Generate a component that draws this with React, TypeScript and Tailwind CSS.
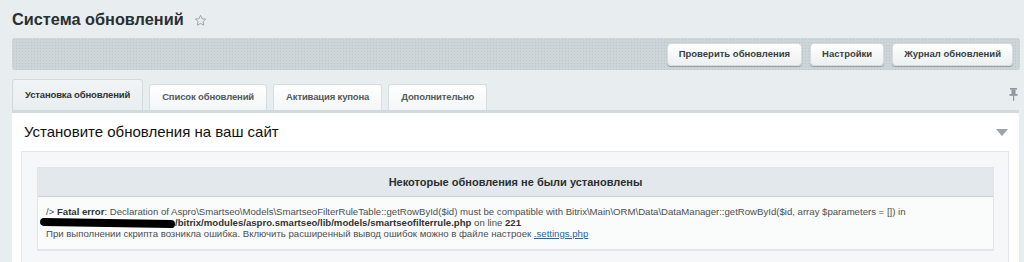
import React from "react";

const buttons = ["Проверить обновления", "Настройки", "Журнал обновлений"];
const tabs = ["Установка обновлений", "Список обновлений", "Активация купона", "Дополнительно"];

function Star() {
  return (
    <svg width="13" height="13" viewBox="0 0 24 24" className="ml-[10px] mt-[3px]">
      <path
        d="M12 2.5l2.9 6.2 6.7.7-5 4.6 1.4 6.6L12 17.3l-5.9 3.3 1.4-6.6-5-4.6 6.7-.7z"
        fill="none"
        stroke="#9aa3a8"
        strokeWidth="1.8"
        strokeLinejoin="round"
      />
    </svg>
  );
}

function Pin() {
  return (
    <svg width="9" height="13" viewBox="0 0 9 13">
      <rect x="1" y="0" width="7" height="1.6" fill="#8e979b" />
      <rect x="2.5" y="1.5" width="4" height="4.5" fill="#8e979b" />
      <rect x="0.5" y="6" width="8" height="1.8" fill="#8e979b" />
      <rect x="4" y="7.8" width="1.2" height="5" fill="#8e979b" />
    </svg>
  );
}

export default function App() {
  return (
    <div className="min-h-[262px] bg-[#e8eef0] font-['Liberation_Sans',Arial,sans-serif] text-[#333]">
      <div className="pl-3 pr-[4px] pt-[7px]">
        {/* Title */}
        <div className="flex items-center h-[24px]">
          <h1 className="text-[16.3px] font-bold text-[#2b2f31] leading-none">Система обновлений</h1>
          <Star />
        </div>

        {/* Toolbar */}
        <div className="mt-[7px] h-[32px] rounded-[3px] bg-[#cdd5d8] bg-[radial-gradient(#bcc5c9_0.6px,transparent_0.8px)] bg-[length:3px_3px] flex items-center justify-end gap-[8px] pr-[7px]">
          {buttons.map((b) => (
            <button
              key={b}
              className="h-[23px] px-[11px] rounded-[4px] bg-gradient-to-b from-white to-[#ecf0f1] text-[9.5px] font-bold text-[#3a3f42] shadow-[0_1px_1px_rgba(0,0,0,0.25)] border border-[#d5dcdf]"
            >
              {b}
            </button>
          ))}
        </div>

        {/* Tabs */}
        <div className="mt-[9px] flex items-end gap-[6px] pr-[1px]">
          {tabs.map((t, i) =>
            i === 0 ? (
              <div
                key={t}
                className="h-[31px] px-3 flex items-center rounded-t-[3px] bg-gradient-to-b from-[#f1f4f5] to-[#e9eef0] border border-b-0 border-[#d3dadd] text-[9.5px] tracking-[-0.15px] font-bold text-[#2f3335]"
              >
                {t}
              </div>
            ) : (
              <div
                key={t}
                className="h-[26px] px-3 flex items-center rounded-t-[3px] bg-gradient-to-b from-white to-[#f3f6f7] border border-b-0 border-[#d6dde0] text-[9.5px] tracking-[-0.15px] font-bold text-[#555a5d]"
              >
                {t}
              </div>
            )
          )}
          <div className="ml-auto mb-[9px] mr-[1px]">
            <Pin />
          </div>
        </div>

        {/* Content panel */}
        <div className="mr-[1px] bg-white border-t-[3px] border-[#d3dadd] min-h-[152px]">
          <div className="h-[38px] flex items-center justify-between pl-3 pr-[11px]">
            <h2 className="text-[15px] text-[#111]">Установите обновления на ваш сайт</h2>
            <svg width="12" height="7" viewBox="0 0 12 7">
              <path d="M0 0h12L6 7z" fill="#9ba4a8" />
            </svg>
          </div>

          <div className="ml-[9px] mr-[10px] bg-[#f5f7f8] border border-[#e1e7ea] pt-[15px] pb-[16px] pl-[15px] pr-[14px]">
            <div className="border border-[#dfe5e8] bg-[#fafbfb] shadow-[0_1px_0_#e3e8ea]">
              <div className="h-[29px] bg-[#e2e8eb] border-b border-[#c9d1d5] flex items-center justify-center text-[11px] font-bold text-[#2b2f31]">
                Некоторые обновления не были установлены
              </div>
              <div className="px-2 pt-[9px] pb-[10px] text-[9.6px] leading-[11px] text-[#4a4f52]">
                <div>
                  /&gt; <b className="text-[#333]">Fatal error</b>: Declaration of Aspro\Smartseo\Models\SmartseoFilterRuleTable::getRowById($id) must be compatible with Bitrix\Main\ORM\Data\DataManager::getRowById($id, array $parameters = []) in
                </div>
                <div className="flex items-center">
                  <span className="inline-block w-[135px] h-[8px] -ml-[6px] rounded-full bg-black rotate-[1deg]" />
                  <b className="text-[#333]">/bitrix/modules/aspro.smartseo/lib/models/smartseofilterrule.php</b>
                  <span>&nbsp;on line&nbsp;</span>
                  <b className="text-[#333]">221</b>
                </div>
                <div>
                  При выполнении скрипта возникла ошибка. Включить расширенный вывод ошибок можно в файле настроек{" "}
                  <a className="text-[#2067b0] underline">.settings.php</a>
                </div>
              </div>
            </div>
          </div>
        </div>
      </div>
    </div>
  );
}
